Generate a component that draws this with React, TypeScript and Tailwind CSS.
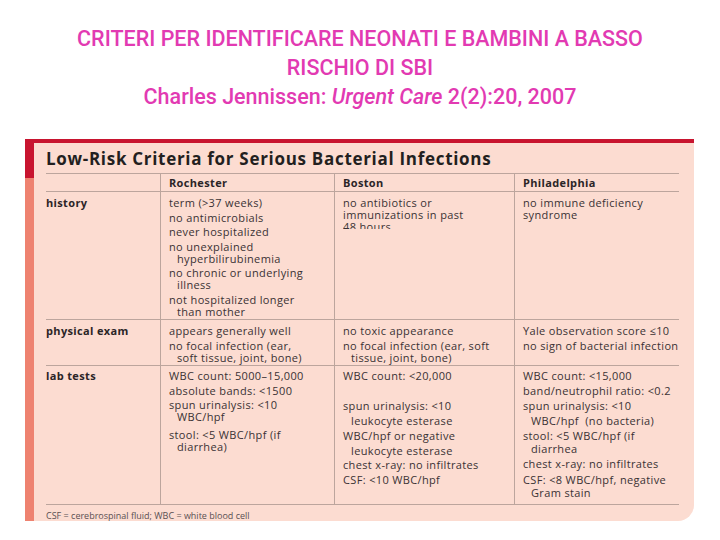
import React from "react";

type Line = { t: string; c?: string };

const N = "mt-[2.5px]";
const I = "pl-[8px]";

const history: Line[][] = [
  [
    { t: "term (>37 weeks)" },
    { t: "no antimicrobials", c: N },
    { t: "never hospitalized", c: N },
    { t: "no unexplained", c: N },
    { t: "hyperbilirubinemia", c: I },
    { t: "no chronic or underlying", c: N },
    { t: "illness", c: I },
    { t: "not hospitalized longer", c: N },
    { t: "than mother", c: I },
  ],
  [
    { t: "no antibiotics or", c: "leading-[11px]" },
    { t: "immunizations in past", c: "leading-[11px]" },
    { t: "48 hours", c: "leading-[10px] h-[8px] overflow-hidden" },
  ],
  [
    { t: "no immune deficiency", c: "leading-[11px]" },
    { t: "syndrome", c: "leading-[11px]" },
  ],
];

const physical: Line[][] = [
  [
    { t: "appears generally well" },
    { t: "no focal infection (ear,", c: N },
    { t: "soft tissue, joint, bone)", c: I },
  ],
  [
    { t: "no toxic appearance" },
    { t: "no focal infection (ear, soft", c: N },
    { t: "tissue, joint, bone)", c: I },
  ],
  [
    { t: "Yale observation score \u226410" },
    { t: "no sign of bacterial infection", c: N },
  ],
];

const lab: Line[][] = [
  [
    { t: "WBC count: 5000\u201315,000" },
    { t: "absolute bands: <1500", c: N },
    { t: "spun urinalysis: <10", c: N },
    { t: "WBC/hpf", c: I },
    { t: "stool: <5 WBC/hpf (if", c: "mt-[6px]" },
    { t: "diarrhea)", c: I },
  ],
  [
    { t: "WBC count: <20,000" },
    { t: "\u00a0", c: "mt-[3px]" },
    { t: "spun urinalysis: <10", c: "mt-[3px]" },
    { t: "leukocyte esterase", c: "mt-[3px] pl-[8px]" },
    { t: "WBC/hpf or negative", c: "mt-[3px]" },
    { t: "leukocyte esterase", c: "mt-[3px] pl-[8px]" },
    { t: "chest x-ray: no infiltrates", c: "mt-[2px]" },
    { t: "CSF: <10 WBC/hpf", c: "mt-[3px]" },
  ],
  [
    { t: "WBC count: <15,000" },
    { t: "band/neutrophil ratio: <0.2", c: "mt-[3px]" },
    { t: "spun urinalysis: <10", c: "mt-[3px]" },
    { t: "WBC/hpf\u00a0\u00a0(no bacteria)", c: "mt-[3px] pl-[8px]" },
    { t: "stool: <5 WBC/hpf (if", c: "mt-[3px]" },
    { t: "diarrhea", c: "mt-[1px] pl-[8px]" },
    { t: "chest x-ray: no infiltrates", c: "mt-[3px]" },
    { t: "CSF: <8 WBC/hpf, negative", c: "mt-[4px]" },
    { t: "Gram stain", c: "mt-[1px] pl-[8px]" },
  ],
];

function Cell({ lines, pad }: { lines: Line[]; pad: string }) {
  return (
    <div className={`border-l border-[#bca59d] pl-[8px] ${pad}`}>
      {lines.map((l, i) => (
        <div key={i} className={`leading-[12px] whitespace-nowrap ${l.c ?? ""}`}>
          {l.t}
        </div>
      ))}
    </div>
  );
}

function Row({
  label,
  cols,
  h,
  pad,
}: {
  label: string;
  cols: Line[][];
  h: string;
  pad: string;
}) {
  return (
    <div className={`grid grid-cols-[114px_174px_180px_1fr] border-b border-[#bca59d] ${h}`}>
      <div className={`font-bold leading-[12px] text-[#2b2527] ${pad}`}>{label}</div>
      {cols.map((c, i) => (
        <Cell key={i} lines={c} pad={pad} />
      ))}
    </div>
  );
}

export default function App() {
  return (
    <div className="w-[720px] h-[540px] bg-white overflow-hidden">
      <div
        className="pt-[24px] text-center text-[21.5px] font-medium leading-[29px] text-[#e23ab2]"
        style={{ fontFamily: "Roboto, 'Open Sans', sans-serif" }}
      >
        <div>CRITERI PER IDENTIFICARE NEONATI E BAMBINI A BASSO</div>
        <div>RISCHIO DI SBI</div>
        <div>
          Charles Jennissen: <span className="italic">Urgent Care</span> 2(2):20, 2007
        </div>
      </div>

      <div className="ml-[25px] mt-[28px] w-[669px] h-[382px] flex bg-[#fcdcd1] rounded-br-[16px] overflow-hidden">
        <div className="w-[9px] flex flex-col">
          <div className="h-[39px] bg-[#c8142f]" />
          <div className="flex-1 bg-[#ee8270]" />
        </div>
        <div className="flex-1 flex flex-col">
          <div className="h-[4px] bg-[#c8142f]" />
          <div
            className="flex-1 pl-[12px] pr-[15px] text-[11px] tracking-[0.35px] text-[#3a3234]"
            style={{ fontFamily: "'Open Sans', 'Noto Sans', sans-serif" }}
          >
            <div className="h-[31px] pt-[5px] border-b border-[#bca59d] text-[17px] leading-[21px] font-bold text-[#231f20] whitespace-nowrap tracking-[0.7px]">
              Low-Risk Criteria for Serious Bacterial Infections
            </div>
            <div className="grid grid-cols-[114px_174px_180px_1fr] h-[18px] border-b border-[#bca59d] font-bold leading-[17px] text-[#2b2527]">
              <div />
              <div className="border-l border-[#bca59d] pl-[8px]">Rochester</div>
              <div className="border-l border-[#bca59d] pl-[8px]">Boston</div>
              <div className="border-l border-[#bca59d] pl-[8px]">Philadelphia</div>
            </div>
            <Row label="history" cols={history} h="h-[128px]" pad="pt-[5px]" />
            <Row label="physical exam" cols={physical} h="h-[46px]" pad="pt-[5px]" />
            <Row label="lab tests" cols={lab} h="h-[139px]" pad="pt-[4px]" />
            <div className="pt-[5px] text-[9px] leading-[11px] tracking-normal text-[#5a5052] whitespace-nowrap">
              CSF = cerebrospinal fluid; WBC = white blood cell
            </div>
          </div>
        </div>
      </div>
    </div>
  );
}
